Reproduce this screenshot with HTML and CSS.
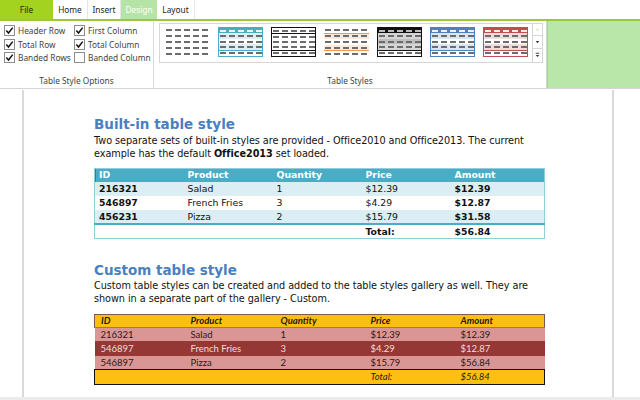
FILE: index.html
```html
<!DOCTYPE html>
<html>
<head>
<meta charset="utf-8">
<link rel="stylesheet" href="styles.css">
</head>
<body>
<div class="app">
  <div class="tabs">
    <div class="tab file">File</div>
    <div class="tab home">Home</div>
    <div class="tab insert">Insert</div>
    <div class="tab design">Design</div>
    <div class="tab layout">Layout</div>
  </div>
  <div class="ribbon">
    <div class="group opts">
      <div class="checks">
        <label class="chk"><span class="cb"><svg viewBox="0 0 9 9"><path d="M1.3 4.6 L3.5 7 L7.7 1.6" /></svg></span>Header Row</label>
        <label class="chk c2"><span class="cb"><svg viewBox="0 0 9 9"><path d="M1.3 4.6 L3.5 7 L7.7 1.6" /></svg></span>First Column</label>
        <label class="chk"><span class="cb"><svg viewBox="0 0 9 9"><path d="M1.3 4.6 L3.5 7 L7.7 1.6" /></svg></span>Total Row</label>
        <label class="chk c2"><span class="cb"><svg viewBox="0 0 9 9"><path d="M1.3 4.6 L3.5 7 L7.7 1.6" /></svg></span>Total Column</label>
        <label class="chk"><span class="cb"><svg viewBox="0 0 9 9"><path d="M1.3 4.6 L3.5 7 L7.7 1.6" /></svg></span>Banded Rows</label>
        <label class="chk c2"><span class="cb"></span>Banded Column</label>
      </div>
      <div class="glabel">Table Style Options</div>
    </div>
    <div class="group styles">
      <div class="gwrap">
        <div class="gallery">
          <div class="thumb plain"><i></i><i></i><i></i><i></i><i></i></div>
          <div class="thumb teal"><i class="h"></i><i class="b"></i><i></i><i class="b l"></i><i class="t"></i></div>
          <div class="thumb outline"><i class="h"></i><i></i><i></i><i class="l"></i><i></i></div>
          <div class="thumb orange"><i class="h"></i><i class="b"></i><i></i><i class="b l"></i><i></i></div>
          <div class="thumb black"><i class="h"></i><i class="b"></i><i class="b2"></i><i class="b l"></i><i></i></div>
          <div class="thumb blue"><i class="h"></i><i class="b"></i><i></i><i class="b l"></i><i class="t"></i></div>
          <div class="thumb red"><i class="h"></i><i class="b"></i><i></i><i class="b l"></i><i class="t"></i></div>
        </div>
        <div class="scroll">
          <div class="sbtn up"><svg viewBox="0 0 10 13"><path d="M3 7.5 L5 5.5 L7 7.5 Z" fill="#c9d98a"/></svg></div>
          <div class="sbtn"><svg viewBox="0 0 10 13"><path d="M3 5.5 L7 5.5 L5 7.8 Z" fill="#333"/></svg></div>
          <div class="sbtn more"><svg viewBox="0 0 10 14"><path d="M3 4.5 H7" stroke="#333" stroke-width="1"/><path d="M3 6.5 L7 6.5 L5 8.8 Z" fill="#333"/></svg></div>
        </div>
      </div>
      <div class="glabel">Table Styles</div>
    </div>
    <div class="greenpanel"></div>
  </div>
  <div class="docarea">
    <div class="page">
      <h1>Built-in table style</h1>
      <p><span class="ln">Two separate sets of built-in styles are provided - Office2010 and Office2013. The current</span><span class="ln"><span>example has the default</span> <b>Office2013</b> <span>set loaded.</span></span></p>
      <table class="t1">
        <colgroup><col class="c"><col class="c"><col class="c"><col class="c"><col></colgroup>
        <thead>
          <tr><th class="caret">ID</th><th>Product</th><th>Quantity</th><th>Price</th><th>Amount</th></tr>
        </thead>
        <tbody>
          <tr class="band"><td class="bd">216321</td><td>Salad</td><td>1</td><td>$12.39</td><td class="bd">$12.39</td></tr>
          <tr><td class="bd">546897</td><td>French Fries</td><td>3</td><td>$4.29</td><td class="bd">$12.87</td></tr>
          <tr class="band"><td class="bd">456231</td><td>Pizza</td><td>2</td><td>$15.79</td><td class="bd">$31.58</td></tr>
          <tr class="total"><td></td><td></td><td></td><td class="bd">Total:</td><td class="bd">$56.84</td></tr>
        </tbody>
      </table>
      <h1 class="h2">Custom table style</h1>
      <p class="p2">Custom table styles can be created and added to the table styles gallery as well. They are shown in a separate part of the gallery - Custom.</p>
      <table class="t2">
        <thead>
          <tr><th>ID</th><th>Product</th><th>Quantity</th><th>Price</th><th>Amount</th></tr>
        </thead>
        <tbody>
          <tr class="pink"><td>216321</td><td>Salad</td><td>1</td><td>$12.39</td><td>$12.39</td></tr>
          <tr class="dark"><td>546897</td><td>French Fries</td><td>3</td><td>$4.29</td><td>$12.87</td></tr>
          <tr class="pink"><td>546897</td><td>Pizza</td><td>2</td><td>$15.79</td><td>$56.84</td></tr>
          <tr class="total"><td></td><td></td><td></td><td>Total:</td><td>$56.84</td></tr>
        </tbody>
      </table>
    </div>
  </div>
  <div class="hbar"></div>
</div>
</body>
</html>
```

FILE: styles.css
```css
* { box-sizing: border-box; }
html, body { margin: 0; padding: 0; }
body { width: 640px; height: 400px; overflow: hidden; background: #fff; font-family: "Noto Sans", "Open Sans", sans-serif; color: #333; }
.app { display: flex; flex-direction: column; height: 400px; }

.tabs { display: flex; height: 21px; border-bottom: 2px solid #9cc93b; flex: none; }
.tab { font-size: 8.3px; line-height: 19px; text-align: center; color: #222; border-right: 1px solid #e6e6e6; }
.tab.file { width: 53px; background: #a3d21f; color: #1f2a00; border-right: none; }
.tab.home { width: 35px; }
.tab.insert { width: 33px; }
.tab.design { width: 36px; background: #b6e4a6; color: #fff; border-right: none; }
.tab.layout { width: 38px; }

.ribbon { display: flex; height: 68px; border-bottom: 1px solid #d3d6d0; flex: none; }
.group { display: flex; flex-direction: column; border-right: 1px solid #d9d9d9; }
.glabel { margin-top: auto; text-align: center; font-size: 8.3px; line-height: 11px; padding-bottom: 2px; color: #444; }
.opts { width: 154px; }
.checks { display: grid; grid-template-columns: 70px 80px; grid-auto-rows: 13.5px; padding: 3px 0 0 4px; }
.chk { display: flex; align-items: center; gap: 3px; font-size: 8.3px; color: #444; white-space: nowrap; }
.cb { width: 11px; height: 11px; border: 1px solid #8d8d8d; background: #fff; display: flex; align-items: center; justify-content: center; flex: none; }
.cb svg { width: 9px; height: 9px; }
.cb path { stroke: #111; stroke-width: 1.5; fill: none; }

.styles { width: 393px; }
.gwrap { display: flex; margin: 2px 0 0 5px; }
.gallery { width: 374px; height: 40px; border: 1px solid #d6d6d6; padding: 3px 0 0 5px; display: flex; gap: 8px; align-items: flex-start; }
.scroll { width: 10px; display: flex; flex-direction: column; }
.sbtn { height: 13px; border: 1px solid #d6d6d6; border-left: none; display: flex; }
.sbtn + .sbtn { border-top: none; height: 13px; }
.sbtn.more { height: 14px; }
.sbtn svg { width: 9px; height: 100%; }

.thumb { width: 45px; height: 30px; display: flex; flex-direction: column; --dash: #6c6c6c; }
.thumb i { flex: 1; background-image: repeating-linear-gradient(90deg, var(--dash) 0 6px, transparent 6px 9px); background-size: 42px 2px; background-repeat: no-repeat; background-position: 1px 50%; }
.thumb i.h { --dash: #f2f2f2; }
.teal { border: 1px solid #4bacc6; }
.teal i.h { background-color: #4bacc6; }
.teal i.b { background-color: #daeef3; }
.teal i.l { border-bottom: 1.5px solid #4bacc6; }
.outline { border: 1px solid #111; }
.outline i.h { --dash: #6c6c6c; border-bottom: 1px solid #111; }
.outline i.l { border-bottom: 1.5px solid #111; }
.orange i.h { --dash: #6c6c6c; border-bottom: 1.5px solid #f79646; }
.orange i.b { background-color: #fde9d9; }
.orange i.l { border-bottom: 1.5px solid #f79646; }
.black { border: 1px solid #111; }
.black i.h { background-color: #111; --dash: #bbb; }
.black i.b { background-color: #d6d6d6; }
.black i.b2 { background-color: #bfbfbf; }
.black i.l { border-bottom: 1.5px solid #111; }
.blue { border: 1px solid #4f81bd; }
.blue i.h { background-color: #4f81bd; }
.blue i.b { background-color: #dbe5f1; }
.blue i.l { border-bottom: 1.5px solid #4f81bd; }
.red { border: 1px solid #c0504d; }
.red i.h { background-color: #c0504d; }
.red i.b { background-color: #f2dcdb; }
.red i.l { border-bottom: 1.5px solid #c0504d; }

.greenpanel { flex: 1; background: #b9e6a9; border-left: 1px solid #a2d58e; }

.docarea { flex: 1; padding-top: 1px; background: #fff; min-height: 0; }
.page { margin-left: 22px; width: 592px; height: 100%; border-left: 2px solid #dadada; border-right: 2px solid #dadada; padding: 26px 65px 0 70px; font-family: "DejaVu Sans", Verdana, sans-serif; color: #111; }
h1 { margin: 0; font-size: 13.5px; line-height: 16px; color: #4a7fc0; font-weight: bold; }
h1.h2 { margin-top: 23px; }
p { margin: 2px 0 0; font-size: 9.7px; line-height: 13px; letter-spacing: -0.05px; }
p.p2 { margin-top: 1px; }
p .ln { display: block; white-space: nowrap; }
p b { font-weight: bold; }

table { width: 451px; border-collapse: collapse; table-layout: fixed; }
col.c { width: 89px; }
.t1 { margin-top: 8px; font-size: 9.3px; border: 1px solid #92cddc; }
.t1 th { background: #4bacc6; color: #fff; text-align: left; height: 13px; padding: 0 0 0 4px; font-weight: bold; line-height: 12px; }
.t1 th.caret { box-shadow: inset 1px 0 #e03a2a; }
.t1 td { height: 14px; padding: 0 0 0 4px; line-height: 13px; color: #111; }
.t1 tr.band td { background: #daeef3; }
.t1 td.bd { font-weight: bold; }
.t1 tr.total td { border-top: 2px solid #4bacc6; height: 13px; }

.t2 { margin-top: 9px; font-family: Lato, "Open Sans", sans-serif; font-size: 9.5px; }
.t2 th { background: #fec010; color: #1a1a1a; font-style: italic; font-weight: bold; text-align: left; height: 13px; padding: 0 0 0 6px; line-height: 12px; border-top: 1px solid #7f5a4a; border-bottom: 1px solid #a0785a; }
.t2 th:first-child { border-left: 1px solid #7f5a4a; }
.t2 th:last-child { border-right: 1px solid #7f5a4a; }
.t2 td { padding: 0 0 0 6px; line-height: 13px; }
.t2 tr.pink td { background: #da9694; color: #2a1a1a; height: 13px; }
.t2 tr.dark td { background: #953735; color: #f4dcdb; height: 15px; }
.t2 tr.pink + tr.total td { height: 15px; }
.t2 tr.total td { background: #fec010; color: #1a1a1a; font-style: italic; border-top: 1px solid #111; border-bottom: 1px solid #111; }
.t2 tr.total td:first-child { border-left: 1px solid #111; }
.t2 tr.total td:last-child { border-right: 1px solid #111; }

.hbar { height: 3px; background: #ebebeb; flex: none; }
```
